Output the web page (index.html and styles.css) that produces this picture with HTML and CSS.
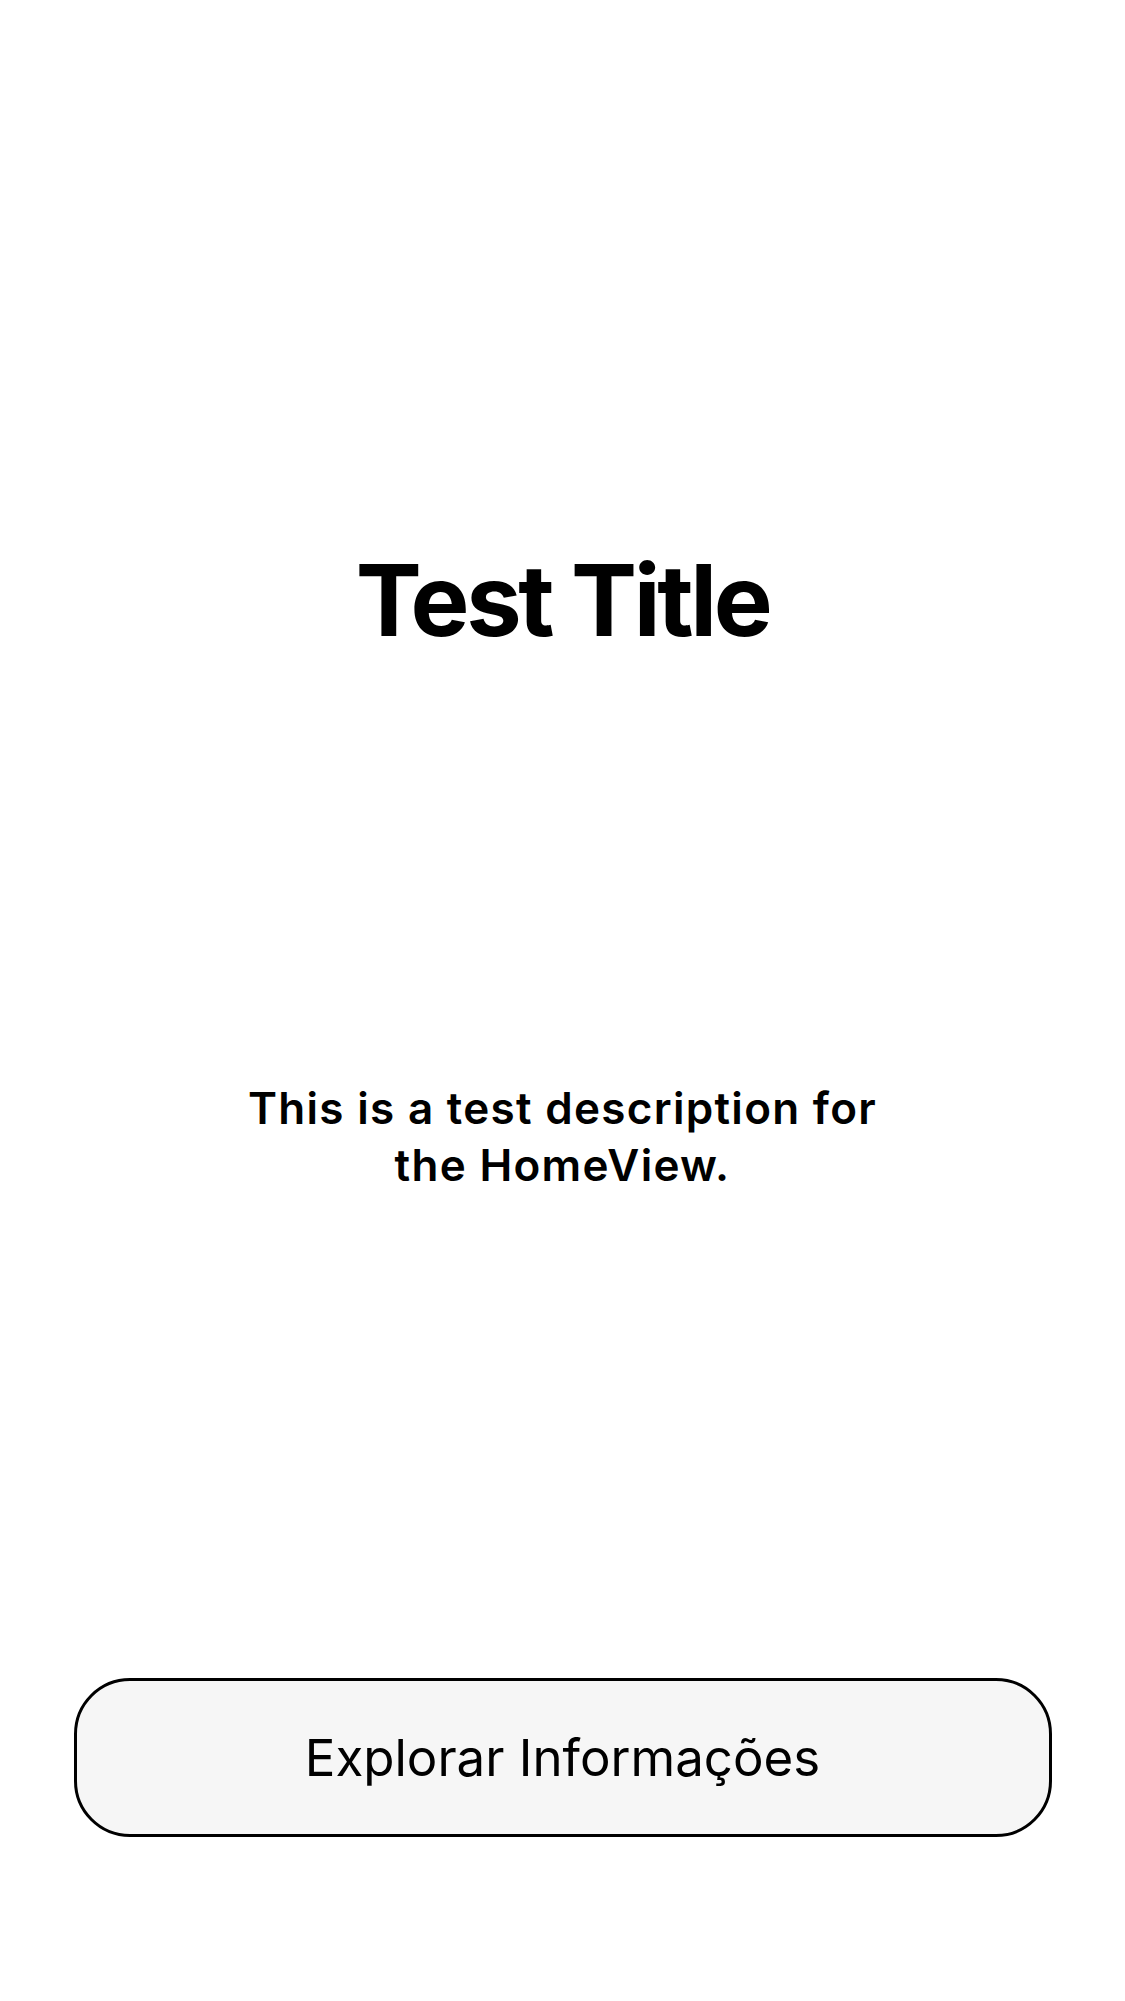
FILE: index.html
```html
<!DOCTYPE html>
<html lang="pt">
<head>
<meta charset="utf-8">
<title>HomeView</title>
<link rel="stylesheet" href="styles.css">
</head>
<body>
<main class="screen">
  <h1 class="title">Test Title</h1>
  <p class="description">This is a test description for<br>the HomeView.</p>
  <button class="explore-button" type="button">Explorar Informações</button>
</main>
</body>
</html>
```

FILE: styles.css
```css
html, body {
  margin: 0;
  padding: 0;
  background: #ffffff;
}

.screen {
  box-sizing: border-box;
  width: 1125px;
  height: 2001px;
  display: flex;
  flex-direction: column;
  align-items: center;
  padding: 540px 73px 0 73px;
  font-family: "Inter", "Noto Sans", sans-serif;
  color: #000000;
}

.title {
  margin: 0;
  font-size: 99px;
  line-height: 120px;
  font-weight: 700;
  letter-spacing: -3.4px;
  text-align: center;
}

.description {
  margin: 420px 0 0 0;
  font-size: 44px;
  line-height: 57px;
  font-weight: 600;
  letter-spacing: 1.3px;
  text-align: center;
}

.explore-button {
  box-sizing: border-box;
  margin-top: 484px;
  width: 978px;
  height: 159px;
  display: flex;
  align-items: center;
  justify-content: center;
  background: #f6f6f6;
  border: 3px solid #000000;
  border-radius: 56px;
  font-family: "Inter", "Noto Sans", sans-serif;
  font-size: 51px;
  font-weight: 400;
  color: #000000;
  padding: 0;
}
```
